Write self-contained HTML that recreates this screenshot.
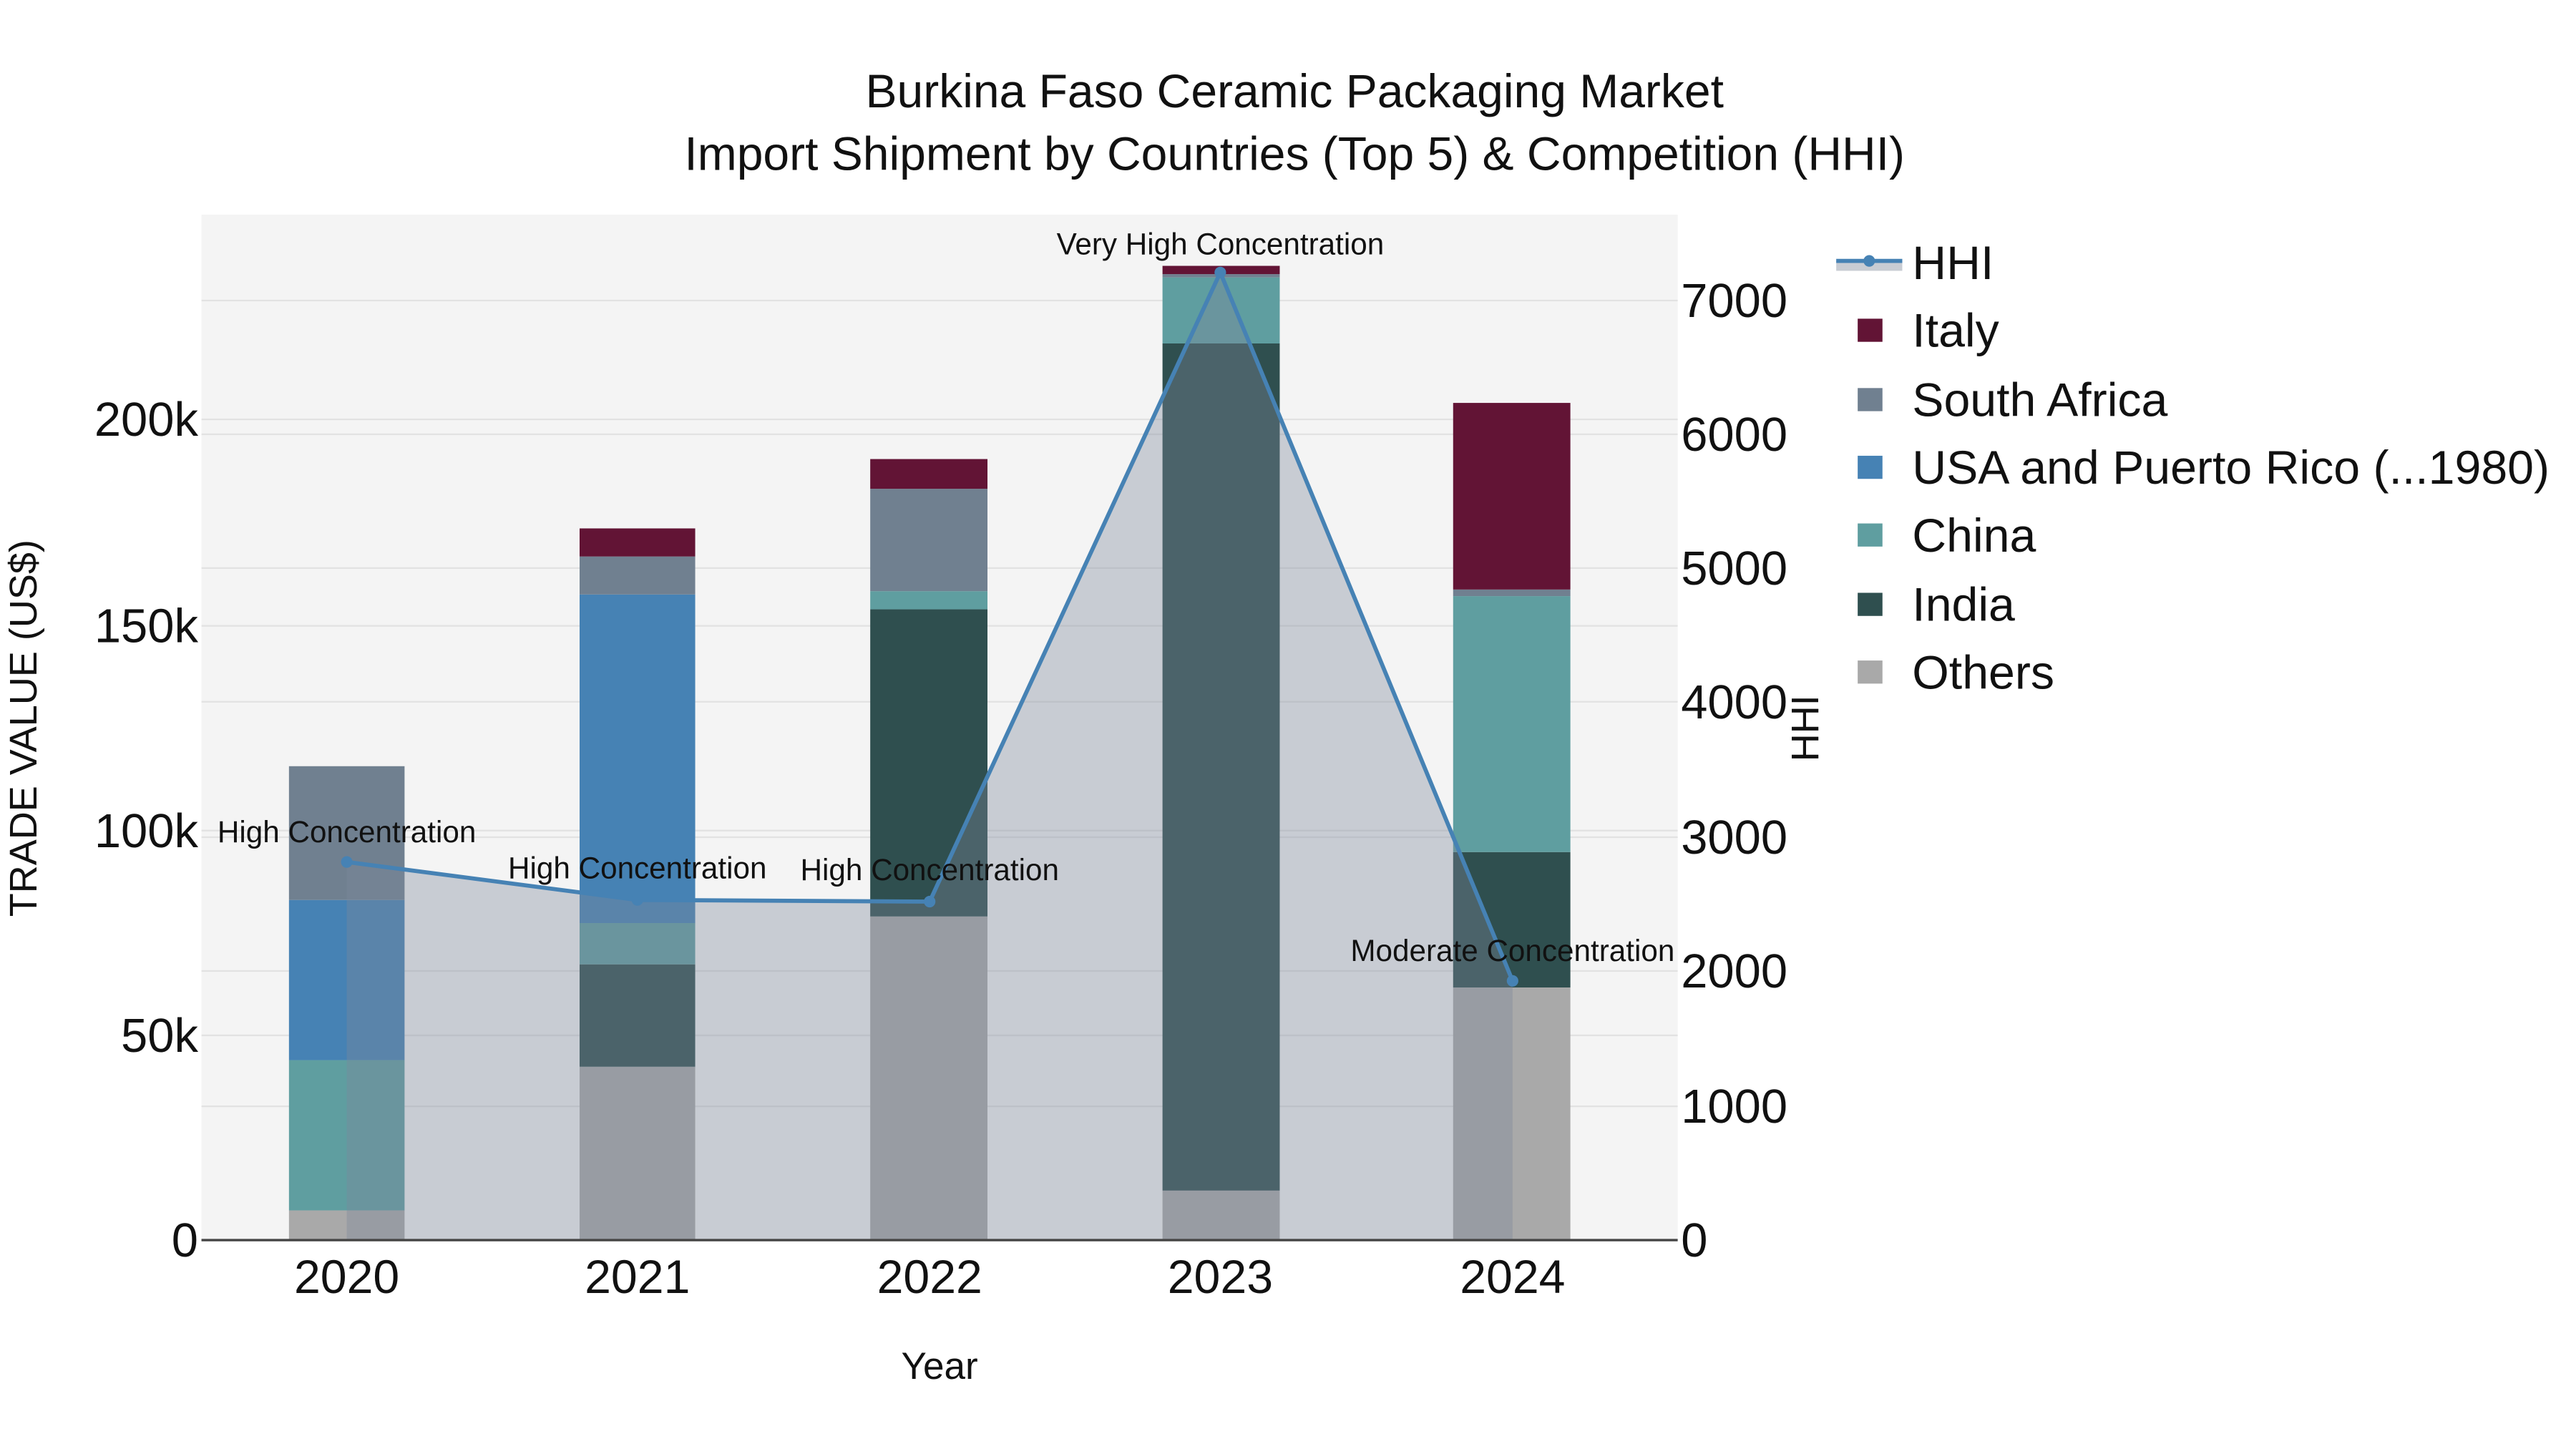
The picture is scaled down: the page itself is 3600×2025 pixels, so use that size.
<!DOCTYPE html>
<html><head><meta charset="utf-8"><style>
html,body{margin:0;padding:0;background:#fff;}
svg{display:block;}
text{font-family:"Liberation Sans",Arial,sans-serif;fill:#111;}
</style></head><body>
<svg width="3600" height="2025" viewBox="0 0 1560 877.5" xmlns="http://www.w3.org/2000/svg">
<rect x="0" y="0" width="1560" height="877.5" fill="#fff"/>
<rect x="122" y="130" width="894" height="621" fill="#f4f4f4"/>
<g stroke="#e2e2e2" stroke-width="1">
<line x1="122" x2="1016" y1="627" y2="627"/><line x1="122" x2="1016" y1="503" y2="503"/>
<line x1="122" x2="1016" y1="379" y2="379"/><line x1="122" x2="1016" y1="254" y2="254"/>
<line x1="122" x2="1016" y1="670" y2="670"/><line x1="122" x2="1016" y1="588" y2="588"/>
<line x1="122" x2="1016" y1="507" y2="507"/><line x1="122" x2="1016" y1="425" y2="425"/>
<line x1="122" x2="1016" y1="344" y2="344"/><line x1="122" x2="1016" y1="263" y2="263"/>
<line x1="122" x2="1016" y1="182" y2="182"/>
</g>
<rect x="175" y="733" width="70" height="18" fill="#A9A9A9"/>
<rect x="175" y="642" width="70" height="91" fill="#5F9EA0"/>
<rect x="175" y="545" width="70" height="97" fill="#4682B4"/>
<rect x="175" y="464" width="70" height="81" fill="#708090"/>
<rect x="351" y="646" width="70" height="105" fill="#A9A9A9"/>
<rect x="351" y="584" width="70" height="62" fill="#2F4F4F"/>
<rect x="351" y="559" width="70" height="25" fill="#5F9EA0"/>
<rect x="351" y="360" width="70" height="199" fill="#4682B4"/>
<rect x="351" y="337" width="70" height="23" fill="#708090"/>
<rect x="351" y="320" width="70" height="17" fill="#621435"/>
<rect x="527" y="555" width="71" height="196" fill="#A9A9A9"/>
<rect x="527" y="369" width="71" height="186" fill="#2F4F4F"/>
<rect x="527" y="358" width="71" height="11" fill="#5F9EA0"/>
<rect x="527" y="296" width="71" height="62" fill="#708090"/>
<rect x="527" y="278" width="71" height="18" fill="#621435"/>
<rect x="704" y="721" width="71" height="30" fill="#A9A9A9"/>
<rect x="704" y="208" width="71" height="513" fill="#2F4F4F"/>
<rect x="704" y="168" width="71" height="40" fill="#5F9EA0"/>
<rect x="704" y="166" width="71" height="2" fill="#708090"/>
<rect x="704" y="161" width="71" height="5" fill="#621435"/>
<rect x="880" y="598" width="71" height="153" fill="#A9A9A9"/>
<rect x="880" y="516" width="71" height="82" fill="#2F4F4F"/>
<rect x="880" y="361" width="71" height="155" fill="#5F9EA0"/>
<rect x="880" y="357" width="71" height="4" fill="#708090"/>
<rect x="880" y="244" width="71" height="113" fill="#621435"/>
<polygon points="210,751 210,522 386,545 563,546 739,165 916,594 916,751" fill="rgba(126,136,155,0.37)"/>
<polyline points="210,522 386,545 563,546 739,165 916,594" fill="none" stroke="#4682B4" stroke-width="2.5"/>
<g fill="#4682B4"><circle cx="210" cy="522" r="3.5"/><circle cx="386" cy="545" r="3.5"/><circle cx="563" cy="546" r="3.5"/><circle cx="739" cy="165" r="3.5"/><circle cx="916" cy="594" r="3.5"/></g>
<line x1="122" x2="1016" y1="751" y2="751" stroke="#444" stroke-width="1.5"/>
<g font-size="18.3" text-anchor="middle">
<text x="210" y="510">High Concentration</text>
<text x="386" y="532">High Concentration</text>
<text x="563" y="533">High Concentration</text>
<text x="739" y="154">Very High Concentration</text>
<text x="916" y="582">Moderate Concentration</text>
</g>
<g font-size="28.6" text-anchor="middle">
<text x="784" y="65">Burkina Faso Ceramic Packaging Market</text>
<text x="784" y="103">Import Shipment by Countries (Top 5) &amp; Competition (HHI)</text>
</g>
<g font-size="29" text-anchor="end">
<text x="120" y="761">0</text><text x="120" y="637">50k</text><text x="120" y="513">100k</text>
<text x="120" y="389">150k</text><text x="120" y="264">200k</text>
</g>
<g font-size="29">
<text x="1018" y="761">0</text><text x="1018" y="680">1000</text><text x="1018" y="598">2000</text>
<text x="1018" y="517">3000</text><text x="1018" y="435">4000</text><text x="1018" y="354">5000</text>
<text x="1018" y="273">6000</text><text x="1018" y="192">7000</text>
</g>
<g font-size="28.7" text-anchor="middle">
<text x="210" y="783">2020</text><text x="386" y="783">2021</text><text x="563" y="783">2022</text>
<text x="739" y="783">2023</text><text x="916" y="783">2024</text>
</g>
<text x="569" y="835" font-size="23" text-anchor="middle">Year</text>
<text transform="translate(22,441) rotate(-90)" font-size="23.4" text-anchor="middle">TRADE VALUE (US$)</text>
<text transform="translate(1101,441) rotate(-90)" font-size="23.4" text-anchor="middle">HHI</text>
<rect x="1112" y="158" width="40" height="6" fill="#c8ccd3"/>
<line x1="1112" x2="1152" y1="158" y2="158" stroke="#4682B4" stroke-width="2.5"/>
<circle cx="1132" cy="158" r="3.5" fill="#4682B4"/>
<rect x="1125" y="193" width="15" height="14" fill="#621435"/>
<rect x="1125" y="235" width="15" height="14" fill="#708090"/>
<rect x="1125" y="276" width="15" height="14" fill="#4682B4"/>
<rect x="1125" y="317" width="15" height="14" fill="#5F9EA0"/>
<rect x="1125" y="359" width="15" height="14" fill="#2F4F4F"/>
<rect x="1125" y="400" width="15" height="14" fill="#A9A9A9"/>
<g font-size="28.7">
<text x="1158" y="169">HHI</text>
<text x="1158" y="210">Italy</text>
<text x="1158" y="252">South Africa</text>
<text x="1158" y="293">USA and Puerto Rico (...1980)</text>
<text x="1158" y="334">China</text>
<text x="1158" y="376">India</text>
<text x="1158" y="417">Others</text>
</g>
</svg>
</body></html>
